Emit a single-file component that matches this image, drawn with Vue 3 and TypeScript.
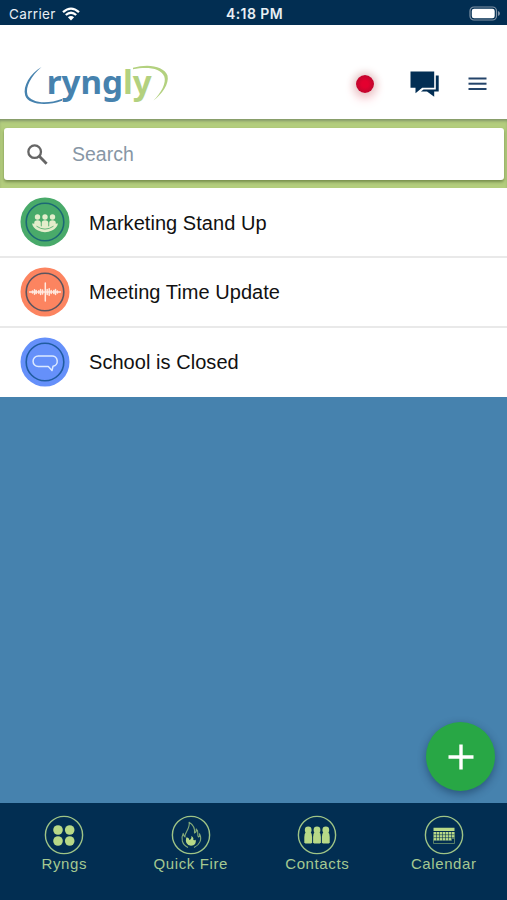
<script setup lang="ts">
type RyngKind = 'meeting' | 'voice' | 'message'
type TabKind = 'ryngs' | 'fire' | 'contacts' | 'calendar'

interface Ryng { kind: RyngKind; title: string }
interface Tab { kind: TabKind; label: string }

const ryngs: Ryng[] = [
  { kind: 'meeting', title: 'Marketing Stand Up' },
  { kind: 'voice', title: 'Meeting Time Update' },
  { kind: 'message', title: 'School is Closed' },
]

const tabs: Tab[] = [
  { kind: 'ryngs', label: 'Ryngs' },
  { kind: 'fire', label: 'Quick Fire' },
  { kind: 'contacts', label: 'Contacts' },
  { kind: 'calendar', label: 'Calendar' },
]

const people: number[] = [11.2, 20, 28.8]
const heads: number[] = [37.5, 45, 52.5]
</script>

<template>
  <div class="app">
    <div class="status">
      <div class="carrier">
        <span>Carrier</span>
        <svg width="18" height="14" viewBox="0 0 18 14" fill="none" stroke="#fff" stroke-width="2.3">
          <path d="M1 5.2Q9-2 17 5.2M3.8 8Q9 3.4 14.2 8" />
          <path d="M9 13.6L5.9 10.3Q9 7.8 12.1 10.3Z" fill="#fff" stroke="none" />
        </svg>
      </div>
      <span class="time">4:18 PM</span>
      <div class="battery">
        <svg width="32" height="15" viewBox="0 0 32 15">
          <rect x="1" y="1" width="26.5" height="13" rx="4" fill="none" stroke="#8193a6" stroke-width="1.2" />
          <rect x="2.8" y="2.8" width="22.9" height="9.4" rx="2.3" fill="#fff" />
          <path d="M29 5q2 .7 2 2.5T29 10z" fill="#8193a6" />
        </svg>
      </div>
    </div>

    <header class="header">
      <svg class="logo" width="146" height="60" viewBox="0 -8 146 60">
        <path d="M17.500 5C7 14 1 25 3.500 33C7 40.500 22 43 38.500 36.800L38 38.800C22 44.500 4 42.500 1.200 33.500C-1.500 24 6 12 17.500 5Z" fill="#4682ae" />
        <path d="M109 5.800C124 1.200 140 4 143.500 13.500C145.500 22 138 32 129.500 38.500C137.500 30.500 142.500 21 140.300 14.500C137 6 123 4.500 109 7.300Z" fill="#b3d17f" />
        <text x="22.800" y="31.500" class="wordmark" textLength="105" lengthAdjust="spacingAndGlyphs"><tspan fill="#4682ae">ryng</tspan><tspan fill="#b3d17f">ly</tspan></text>
      </svg>
      <div class="actions">
        <span class="record"></span>
        <svg class="chat" width="30" height="27" viewBox="0 0 30 27" fill="#022e54">
          <path d="M.5.500H24.200V16.800H12.200L5.500 22.200V16.800H.5Z" />
          <path d="M25.800 4.600H28.700V20.500H24.200V25.800L17 20.500H10.900L13.600 18.400H25.800Z" />
        </svg>
        <svg class="menu" width="19" height="14" viewBox="0 0 19 14" fill="#24446a">
          <rect x=".5" y=".5" width="18" height="2" /><rect x=".5" y="5.700" width="18" height="2" /><rect x=".5" y="11" width="18" height="2" />
        </svg>
      </div>
    </header>

    <div class="search-bar">
      <div class="search">
        <svg width="21" height="21" viewBox="0 0 20 20" fill="none" stroke="#666" stroke-width="2.200">
          <circle cx="7.300" cy="7.300" r="6" /><path d="M11.500 11.500L18.700 18.700" stroke-width="2.700" />
        </svg>
        <span>Search</span>
      </div>
    </div>

    <main class="content">
      <ul class="list">
        <li v-for="ryng in ryngs" :key="ryng.title" class="row">
          <svg :class="['badge', ryng.kind]" width="50" height="50" viewBox="20 20 50 50">
            <circle class="disc" cx="45" cy="45" r="24.500" />
            <circle class="ring" cx="45" cy="45" r="18.800" />
            <g v-if="ryng.kind === 'meeting'" fill="#e4edcb">
              <g v-for="x in heads" :key="x">
                <circle :cx="x" :cy="40" r="2.700" />
                <path :d="`M${x - 3.3} 50V46Q${x - 3.3} 43.200 ${x} 43.200T${x + 3.3} 46V50Z`" />
              </g>
              <path d="M32 46.500Q35 46 36.500 48Q45 51.500 53.500 48Q55 46 58 46.500Q57 51 52 53.500Q45 57 38 53.500Q33 51 32 46.500Z" />
              <path d="M36.500 49.200Q45 55 53.500 49.200" fill="none" stroke="#49aa6a" stroke-width=".8" />
            </g>
            <g v-else-if="ryng.kind === 'voice'" fill="none" stroke="#ffe9df" stroke-linecap="round">
              <path d="M29.500 45H60.500" stroke-width="1.300" />
              <path d="M32.500 44V46M34.500 42.700V47.300M36.200 43.500V46.500M38.800 43.700V46.300M40.600 42.500V47.500M42.600 43V47M45.300 36V54M47.200 42.500V47.500M49.200 41.800V48.200M51.200 43.500V46.500M53.800 43.500V46.500M55.500 42.500V47.500M57.400 44V46" stroke-width="1.500" />
            </g>
            <path v-else d="M38.300 39H51.700A5.200 5.200 0 0 1 53 49.300L52 53.500L48.300 49.500H38.300A5.250 5.250 0 0 1 38.300 39Z" fill="none" stroke="#dce9ff" stroke-width="1.500" stroke-linejoin="round" />
          </svg>
          <span>{{ ryng.title }}</span>
        </li>
      </ul>
      <button class="fab" aria-label="Add">
        <svg width="26" height="26" viewBox="0 0 26 26" stroke="#fff" stroke-width="3.400"><path d="M13 .5V25.500M.5 13H25.500" /></svg>
      </button>
    </main>

    <nav class="tabs">
      <div v-for="tab in tabs" :key="tab.kind" class="tab">
        <svg width="40" height="40" viewBox="0 0 40 40" fill="#b8d987">
          <circle cx="20" cy="20" r="18.600" fill="none" stroke="#9fc486" stroke-width="1.400" />
          <g v-if="tab.kind === 'ryngs'">
            <circle cx="14" cy="15" r="4.800" /><circle cx="25.700" cy="15" r="4.800" />
            <circle cx="14" cy="26" r="4.800" /><circle cx="25.700" cy="26" r="4.800" />
          </g>
          <g v-else-if="tab.kind === 'fire'">
            <path d="M17 32.500C11 29.500 9.500 23.500 12.200 18.400C12.500 20.500 13 21.500 14 22C13 17.500 19.600 14 18.100 7.200C22 9.500 24 13.500 23.500 18C25 17.500 25.600 15.700 25.200 14C28.500 16 25.500 20 27.500 22C28.700 21.500 28.800 20 28.500 18.800C31.500 24.500 28.500 30 23 32.500" fill="none" stroke="#83a978" stroke-width="1.100" stroke-linejoin="round" />
            <path d="M15.200 22.600Q18 21.700 18.300 25Q21 24 20.300 21Q23 22.500 22.300 25Q24.500 25.500 24.700 24.500Q25.800 30.500 20 30.800Q13.500 30 15.200 22.600Z" />
          </g>
          <g v-else-if="tab.kind === 'contacts'">
            <g v-for="x in people" :key="x">
              <circle :cx="x" cy="15" r="3.400" />
              <path :d="`M${x - 2} 16.500H${x + 2}Q${x + 3.900} 18.500 ${x + 3.900} 22V27.500L${x + 2.900} 28.500H${x - 2.900}L${x - 3.900} 27.500V22Q${x - 3.900} 18.500 ${x - 2} 16.500Z`" />
            </g>
          </g>
          <g v-else>
            <path d="M9.500 12.800H30.500V16H9.500ZM9.500 17H30.500V23.500H28V25.500H9.500Z" />
            <path d="M9.500 24V28.500H30.500V17" fill="none" stroke="#6f956f" stroke-width=".8" />
            <path d="M9.500 19.700H30.500M9.500 22.600H30.500M12.500 17V25.500M15.500 17V25.500M18.500 17V25.500M21.500 17V25.500M24.500 17V25.500M27.500 17V25.500" stroke="#022e52" stroke-width=".55" />
          </g>
        </svg>
        <span>{{ tab.label }}</span>
      </div>
    </nav>
  </div>
</template>

<style>
body { margin: 0; }
</style>

<style scoped>
.app {
  width: 507px;
  height: 900px;
  display: flex;
  flex-direction: column;
  overflow: hidden;
  font-family: "Liberation Sans", Arial, sans-serif;
  background: #4682ae;
}
.status {
  height: 25px;
  flex: none;
  display: grid;
  grid-template-columns: 1fr auto 1fr;
  align-items: center;
  box-sizing: border-box;
  padding: 2px 6px 0 9px;
  background: #022e52;
  color: #e8eef4;
  font-family: Inter, "Liberation Sans", sans-serif;
  font-size: 13px;
}
.carrier { display: flex; align-items: center; gap: 6px; font-size: 13.500px; letter-spacing: .35px; }
.time { margin-left: -1px; font-weight: 600; font-size: 14px; letter-spacing: .4px; }
.battery { display: flex; justify-content: flex-end; }
.header {
  height: 94px;
  flex: none;
  box-sizing: border-box;
  padding: 29px 20px 0 24px;
  display: flex;
  justify-content: space-between;
  align-items: flex-start;
  background: #fff;
}
.logo { overflow: visible; }
.wordmark { font: 700 33px "Noto Sans", "Open Sans", sans-serif; }
.actions { display: flex; align-items: center; height: 60px; }
.record {
  width: 18px;
  height: 18px;
  margin-right: 36px;
  border-radius: 50%;
  background: radial-gradient(circle, #e4002f 25%, #a80a2c 100%);
  box-shadow: 0 0 8px 2px #dfc0c0, 0 5px 12px 1px #ffd3da;
}
.chat { margin-right: 28px; }
.search-bar {
  height: 69px;
  flex: none;
  box-sizing: border-box;
  padding: 9px 3px 8px 4px;
  background: #b3cd7d;
  box-shadow: inset 0 3px 3px -1px #829769;
}
.search {
  height: 52px;
  box-sizing: border-box;
  display: flex;
  align-items: center;
  gap: 24px;
  padding-left: 23px;
  border-radius: 3px;
  background: #fff;
  box-shadow: 0 2px 3px rgba(60, 80, 30, .5);
  color: #8796a5;
  font-size: 19.500px;
}
.content { flex: 1; position: relative; }
.list { margin: 0; padding: 0; list-style: none; background: #fff; }
.row {
  height: 70px;
  box-sizing: border-box;
  display: flex;
  align-items: center;
  gap: 19px;
  padding-left: 20px;
  border-bottom: 2px solid #e9e9e9;
  color: #111;
  font-size: 20px;
  letter-spacing: .05px;
}
.row span { padding-top: 1px; }
.row:first-child span { padding-top: 2px; }
.row:last-child { height: 68.500px; padding-bottom: 1px; border-bottom: 0; }
.meeting .disc { fill: #49aa6a; }
.voice .disc { fill: #fc8460; }
.message .disc { fill: #6590fa; }
.ring { fill: none; stroke-width: 1.600; }
.meeting .ring { stroke: #1c6875; }
.voice .ring { stroke: #5b555f; }
.message .ring { stroke: #205ca0; }
.fab {
  position: absolute;
  right: 12px;
  bottom: 12px;
  width: 69px;
  height: 69px;
  padding: 0;
  border: 0;
  border-radius: 50%;
  display: flex;
  align-items: center;
  justify-content: center;
  background: #28a745;
  box-shadow: 0 3px 8px rgba(0, 25, 55, .42);
}
.tabs {
  height: 97px;
  flex: none;
  box-sizing: border-box;
  padding: 12px 0 0 1px;
  display: grid;
  grid-template-columns: repeat(4, 1fr);
  background: #022e52;
}
.tab {
  display: flex;
  flex-direction: column;
  align-items: center;
  color: #a5c991;
  font-size: 15px;
  line-height: 17px;
  letter-spacing: .6px;
}
</style>
